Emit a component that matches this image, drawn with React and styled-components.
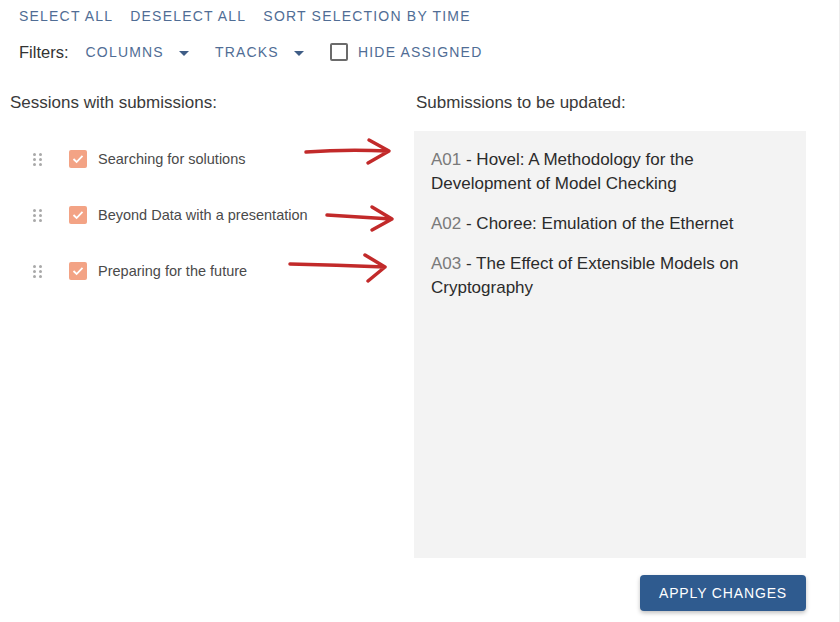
import React from 'react';
import styled, { createGlobalStyle } from 'styled-components';

const GlobalStyle = createGlobalStyle`
  body {
    margin: 0;
    background: #fff;
    font-family: "Liberation Sans", Arial, sans-serif;
  }
`;

const Page = styled.div`
  position: relative;
  width: 840px;
  height: 622px;
  box-sizing: border-box;
  padding: 6px 0 0 10px;
  border-right: 1px solid #ececec;
  overflow: hidden;
`;

const Toolbar = styled.div`
  display: flex;
  align-items: center;
  gap: ${({ gap }) => gap || 16}px;
  height: 20px;
  padding-left: 9px;
  margin-bottom: ${({ mb }) => mb || 0}px;
`;

const TextButton = styled.button`
  display: flex;
  align-items: center;
  gap: ${({ gap }) => gap || 15}px;
  border: 0;
  padding: 0;
  background: none;
  font-family: inherit;
  font-size: 14px;
  letter-spacing: 1.2px;
  text-transform: uppercase;
  color: #506d95;
  cursor: pointer;
  white-space: nowrap;
`;

const Caret = styled.span`
  width: 0;
  height: 0;
  border-left: 5px solid transparent;
  border-right: 5px solid transparent;
  border-top: 5px solid #3f5d86;
  margin: 2px 9px 0 0;
`;

const FilterLabel = styled.span`
  font-size: 16.5px;
  color: #333;
`;

const BoxOutline = styled.span`
  width: 14px;
  height: 14px;
  border: 2px solid #6b6b6b;
  border-radius: 2px;
`;

const Columns = styled.div`
  display: flex;
  margin-top: 31px;
`;

const LeftCol = styled.div`
  width: 405px;
`;

const RightCol = styled.div`
  width: 391px;
  display: flex;
  flex-direction: column;
`;

const Heading = styled.div`
  font-size: 17px;
  color: #3a3a3a;
  height: 20px;
  line-height: 20px;
  padding-left: ${({ pl }) => pl || 0}px;
  margin-bottom: 18px;
  white-space: nowrap;
`;

const SessionList = styled.div`
  display: flex;
  flex-direction: column;
  gap: 38px;
  padding-left: 23px;
  padding-top: 19px;
`;

const SessionRow = styled.div`
  display: flex;
  align-items: center;
  height: 18px;
`;

const Handle = styled.span`
  display: grid;
  grid-template-columns: repeat(2, 3px);
  gap: 2px 3px;
  margin-right: 27px;
  span {
    width: 3px;
    height: 3px;
    border-radius: 50%;
    background: #a9a9a9;
  }
`;

const CheckBox = styled.span`
  width: 18px;
  height: 18px;
  border-radius: 2px;
  background: #f3a385;
  display: flex;
  align-items: center;
  justify-content: center;
  margin-right: 11px;
`;

const SessionLabel = styled.span`
  font-size: 14.5px;
  color: #4a4a4a;
  white-space: nowrap;
`;

const Panel = styled.div`
  background: #f3f3f3;
  height: 427px;
  margin-left: -1px;
  padding: 17px 40px 0 17px;
  box-sizing: border-box;
  display: flex;
  flex-direction: column;
  gap: 16px;
`;

const Submission = styled.div`
  font-size: 17px;
  line-height: 24px;
  color: #2b2b2b;
`;

const Code = styled.span`
  color: #7a7a7a;
`;

const Footer = styled.div`
  display: flex;
  justify-content: flex-end;
  margin-top: 17px;
`;

const ApplyButton = styled.button`
  width: 166px;
  height: 36px;
  border: 0;
  border-radius: 4px;
  background: #2f5b8f;
  color: #fff;
  font-family: inherit;
  font-size: 14px;
  letter-spacing: 0.85px;
  text-transform: uppercase;
  box-shadow: 0 2px 4px rgba(0, 0, 0, 0.25);
  cursor: pointer;
`;

const Annotations = styled.svg`
  position: absolute;
  left: 0;
  top: 0;
  pointer-events: none;
`;

const sessions = [
  'Searching for solutions',
  'Beyond Data with a presentation',
  'Preparing for the future',
];

const submissions = [
  ['A01', 'Hovel: A Methodology for the Development of Model Checking'],
  ['A02', 'Choree: Emulation of the Ethernet'],
  ['A03', 'The Effect of Extensible Models on Cryptography'],
];

const arrows = [
  'M306 152 Q346 149 388 151 M369 140 L389 151 L368 163',
  'M327 215 Q360 217 391 219 M372 207 L392 219 L372 230',
  'M290 264 Q336 265 385 267 M365 255 L385 267 L368 281',
];

const Check = () => (
  <svg width="12" height="10" viewBox="0 0 12 10">
    <path d="M1.5 5 L4.6 8 L10.5 1.8" fill="none" stroke="#fff" strokeWidth="1.8" />
  </svg>
);

export default function App() {
  return (
    <Page>
      <GlobalStyle />
      <Toolbar mb={16} gap={17}>
        <TextButton>Select all</TextButton>
        <TextButton>Deselect all</TextButton>
        <TextButton>Sort selection by time</TextButton>
      </Toolbar>
      <Toolbar gap={17}>
        <FilterLabel>Filters:</FilterLabel>
        <TextButton>Columns <Caret /></TextButton>
        <TextButton>Tracks <Caret /></TextButton>
        <TextButton gap={10}><BoxOutline /> Hide assigned</TextButton>
      </Toolbar>
      <Columns>
        <LeftCol>
          <Heading>Sessions with submissions:</Heading>
          <SessionList>
            {sessions.map((s) => (
              <SessionRow key={s}>
                <Handle>
                  {Array.from({ length: 6 }).map((_, i) => <span key={i} />)}
                </Handle>
                <CheckBox><Check /></CheckBox>
                <SessionLabel>{s}</SessionLabel>
              </SessionRow>
            ))}
          </SessionList>
        </LeftCol>
        <RightCol>
          <Heading pl={1}>Submissions to be updated:</Heading>
          <Panel>
            {submissions.map(([code, title]) => (
              <Submission key={code}>
                <Code>{code}</Code>{` - ${title}`}
              </Submission>
            ))}
          </Panel>
          <Footer>
            <ApplyButton>Apply changes</ApplyButton>
          </Footer>
        </RightCol>
      </Columns>
      <Annotations width="840" height="622">
        {arrows.map((d) => (
          <path key={d} d={d} fill="none" stroke="#c22a2a" strokeWidth="3.5" strokeLinecap="round" strokeLinejoin="round" />
        ))}
      </Annotations>
    </Page>
  );
}
